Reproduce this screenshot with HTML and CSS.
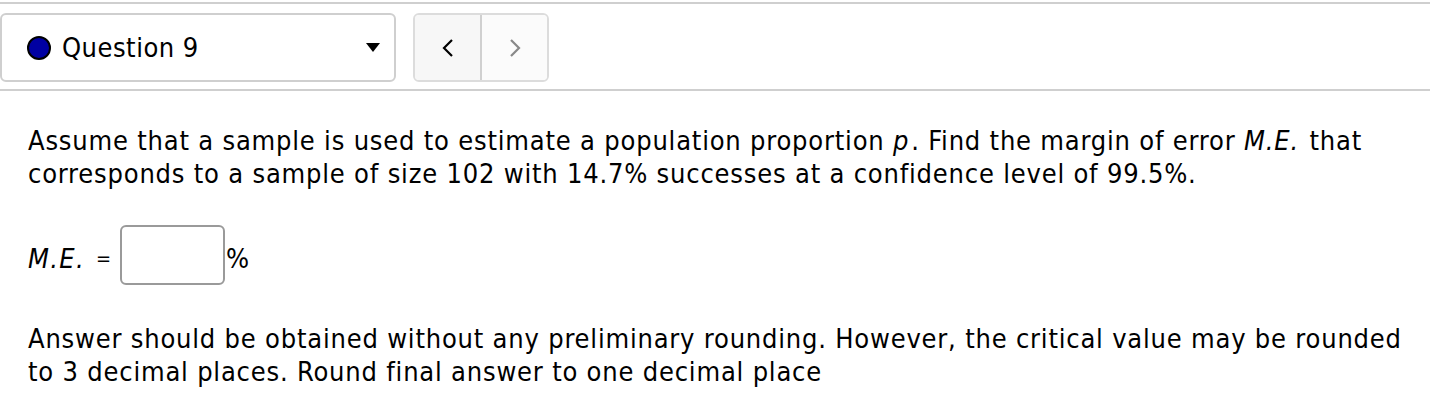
FILE: index.html
```html
<!DOCTYPE html>
<html>
<head>
<meta charset="utf-8">
<link rel="stylesheet" href="styles.css">
</head>
<body>
<header class="qbar">
  <div class="qselect">
    <span class="dot"></span>
    <span class="qlabel">Question 9</span>
    <svg class="caret" width="14" height="9" viewBox="0 0 14 9"><path d="M0 0 H14 L7 9 Z" fill="#000"/></svg>
  </div>
  <div class="qnav">
    <button class="navbtn prev" type="button"><svg width="12" height="20" viewBox="0 0 12 20"><path d="M10 2 L2 10 L10 18" fill="none" stroke="#000" stroke-width="2.2"/></svg></button>
    <button class="navbtn next" type="button"><svg width="12" height="20" viewBox="0 0 12 20"><path d="M2 2 L10 10 L2 18" fill="none" stroke="#888" stroke-width="2.2"/></svg></button>
  </div>
</header>
<main class="content">
  <p class="stem">Assume that a sample is used to estimate a population proportion <i class="mvar">p</i>. Find the margin of error <i class="mvar">M.E.</i> that corresponds to a sample of size 102 with 14.7% successes at a confidence level of 99.5%.</p>
  <div class="answer">
    <span class="var">M.E.</span>
    <span class="eq">=</span>
    <span class="box"></span>
    <span class="pct">%</span>
  </div>
  <p class="note">Answer should be obtained without any preliminary rounding. However, the critical value may be rounded to 3 decimal places. Round final answer to one decimal place</p>
</main>
</body>
</html>
```
FILE: styles.css
```css
html, body {
  margin: 0;
  padding: 0;
  background: #fff;
}
body {
  font-family: "DejaVu Sans Condensed", "DejaVu Sans", sans-serif;
  color: #000;
  width: 1430px;
}
.qbar {
  margin-top: 2px;
  border-top: 2px solid #cfcfcf;
  border-bottom: 2px solid #cfcfcf;
  padding: 9px 0 7px;
  display: flex;
  align-items: stretch;
  gap: 17px;
}
.qselect {
  box-sizing: border-box;
  width: 396px;
  height: 69px;
  border: 2px solid #cfcfcf;
  border-radius: 6px;
  display: flex;
  align-items: center;
  padding-left: 25px;
  padding-right: 14px;
}
.dot {
  box-sizing: border-box;
  width: 24px;
  height: 24px;
  border-radius: 50%;
  background: #0000a2;
  border: 2.5px solid #000;
  margin-right: 11px;
}
.qlabel {
  font-size: 27px;
  letter-spacing: 0.5px;
  flex: 1;
}
.caret {
  display: block;
}
.qnav {
  box-sizing: border-box;
  width: 136px;
  height: 69px;
  border: 2px solid #dcdcdc;
  border-radius: 6px;
  display: flex;
  overflow: hidden;
}
.navbtn {
  flex: 1;
  border: 0;
  margin: 0;
  padding: 0;
  display: flex;
  align-items: center;
  justify-content: center;
}
.prev {
  background: #f7f7f7;
  border-right: 2px solid #d0d0d0;
}
.next {
  background: #fbfbfb;
}
.content {
  padding: 0 18px 0 28px;
}
.stem, .note {
  margin: 0;
  font-size: 27px;
  letter-spacing: 0.8px;
  line-height: 33px;
}
.stem {
  padding-top: 33px;
}
.mvar {
  padding-right: 2px;
}
.answer {
  display: flex;
  align-items: center;
  margin-top: 35px;
  font-size: 27px;
  letter-spacing: 0.85px;
}
.var, .eq, .pct {
  padding-top: 6px;
}
.var {
  font-style: italic;
  width: 68px;
  letter-spacing: 1.3px;
}
.eq {
  font-size: 20px;
  width: 24px;
}
.box {
  box-sizing: border-box;
  width: 105px;
  height: 60px;
  border: 2px solid #9a9a9a;
  border-radius: 6px;
}
.pct {
  margin-left: 1px;
  letter-spacing: 0;
}
.note {
  margin-top: 37px;
}
```
